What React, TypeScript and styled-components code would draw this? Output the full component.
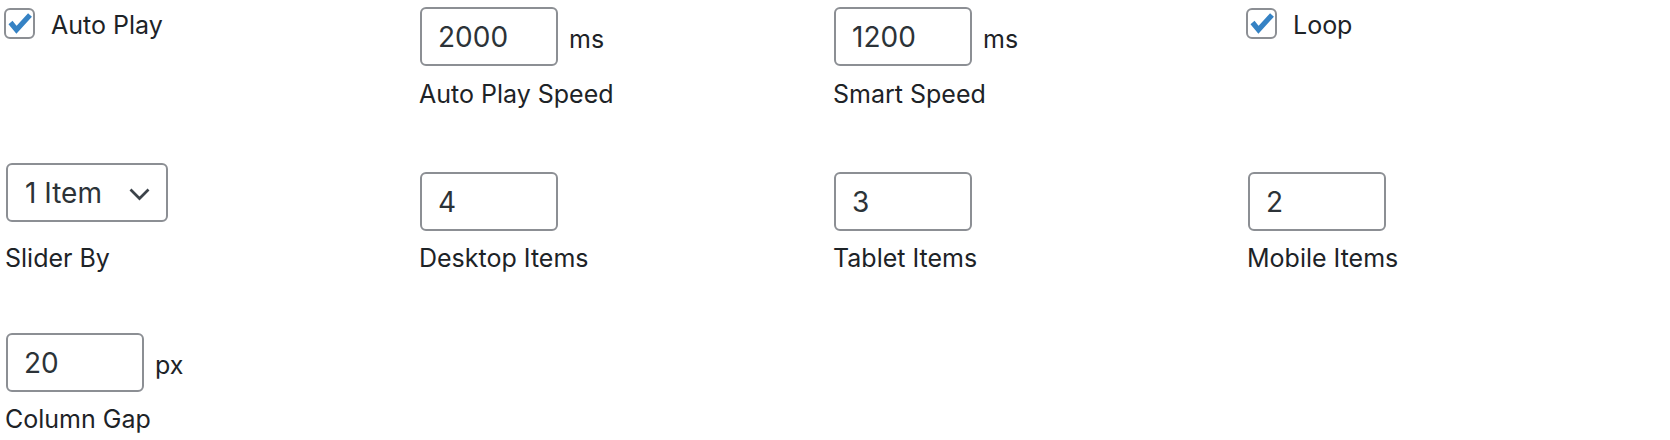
import React from "react";
import styled, { createGlobalStyle } from "styled-components";

const GlobalStyle = createGlobalStyle`
  html, body { margin: 0; padding: 0; background: #ffffff; }
  body {
    font-family: Inter, "Noto Sans", "Liberation Sans", sans-serif;
    color: #1d2327;
    -webkit-font-smoothing: antialiased;
  }
  * { box-sizing: border-box; }
`;

const Page = styled.div`
  padding: 7px 0 0 5px;
  width: 1670px;
  height: 440px;
  overflow: hidden;
`;

const Row = styled.div<{ $top: number }>`
  display: grid;
  grid-template-columns: repeat(4, 414px);
  align-items: end;
  margin-top: ${(p) => p.$top}px;
`;

const Field = styled.div`
  display: flex;
  flex-direction: column;
  align-items: flex-start;
`;

const ControlLine = styled.div`
  display: flex;
  align-items: center;
  gap: 11px;
  margin-left: 1px;
`;

const Label = styled.div<{ $gap: number }>`
  font-size: 25px;
  line-height: 36px;
  margin-top: ${(p) => p.$gap}px;
  color: #1d2327;
  white-space: nowrap;
`;

const TextInput = styled.input`
  width: 138px;
  height: 59px;
  border: 2px solid #8c8f94;
  border-radius: 6px;
  padding: 0 16px;
  font-family: inherit;
  font-size: 28px;
  color: #2c3338;
  background: #fff;
  outline: none;
`;

const Unit = styled.span`
  font-size: 25px;
  color: #1d2327;
  padding-top: 4px;
`;

const SelectBox = styled.div`
  display: flex;
  align-items: center;
  justify-content: space-between;
  width: 162px;
  height: 59px;
  border: 2px solid #8c8f94;
  border-radius: 6px;
  padding: 0 16px 0 17px;
  font-size: 28px;
  color: #2c3338;
  background: #fff;
  margin-left: 1px;
`;

const Chevron = styled.svg`
  display: block;
  width: 21px;
  height: 13px;
  margin-top: 3px;
`;

const CheckRow = styled.label`
  align-self: start;
  display: flex;
  align-items: center;
  gap: 16px;
  font-size: 25px;
  color: #1d2327;
  margin-left: -1px;
`;

const CheckText = styled.span`
  padding-top: 3px;
`;

const CheckBox = styled.span`
  display: block;
  width: 31px;
  height: 31px;
  border: 2px solid #8c8f94;
  border-radius: 6px;
  background: #fff;
`;

const CheckMark = styled.svg`
  display: block;
  width: 27px;
  height: 27px;
`;

const Checkbox: React.FC<{ text: string }> = ({ text }) => (
  <CheckRow>
    <CheckBox role="checkbox" aria-checked="true">
      <CheckMark viewBox="0 0 27 27">
        <polyline
          points="4.5,12.5 10.5,19.8 24,5"
          fill="none"
          stroke="#3582c4"
          strokeWidth="5.2"
          strokeLinejoin="miter"
        />
      </CheckMark>
    </CheckBox>
    <CheckText>{text}</CheckText>
  </CheckRow>
);

const NumberField: React.FC<{ value: string; label: string; unit?: string; gap?: number }> = ({
  value,
  label,
  unit,
  gap = 10,
}) => (
  <Field>
    <ControlLine>
      <TextInput defaultValue={value} />
      {unit && <Unit>{unit}</Unit>}
    </ControlLine>
    <Label $gap={gap}>{label}</Label>
  </Field>
);

const SelectField: React.FC<{ value: string; label: string }> = ({ value, label }) => (
  <Field>
    <SelectBox role="combobox">
      <span>{value}</span>
      <Chevron viewBox="0 0 21 13">
        <polyline points="1.5,1.5 10.5,10.5 19.5,1.5" fill="none" stroke="#3c434a" strokeWidth="2.7" />
      </Chevron>
    </SelectBox>
    <Label $gap={18}>{label}</Label>
  </Field>
);

export default function App() {
  return (
    <>
      <GlobalStyle />
      <Page>
        <Row $top={0}>
          <Checkbox text="Auto Play" />
          <NumberField value="2000" unit="ms" label="Auto Play Speed" />
          <NumberField value="1200" unit="ms" label="Smart Speed" />
          <Checkbox text="Loop" />
        </Row>
        <Row $top={51}>
          <SelectField value="1 Item" label="Slider By" />
          <NumberField value="4" label="Desktop Items" gap={9} />
          <NumberField value="3" label="Tablet Items" gap={9} />
          <NumberField value="2" label="Mobile Items" gap={9} />
        </Row>
        <Row $top={57}>
          <NumberField value="20" unit="px" label="Column Gap" gap={9} />
        </Row>
      </Page>
    </>
  );
}
